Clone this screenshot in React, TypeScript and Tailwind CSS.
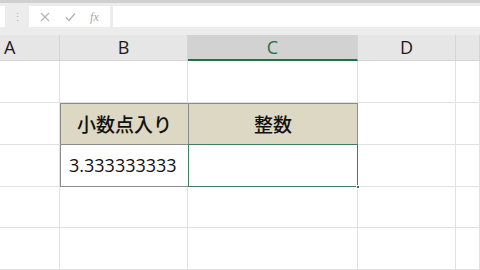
import React from "react";

const cols = ["A", "B", "C", "D", ""];
const font = { fontFamily: '"Open Sans", "Noto Sans CJK JP", sans-serif' };
const jp = { fontFamily: '"Noto Sans CJK JP", sans-serif' };

function HeaderCell({ label, selected }: { label: string; selected?: boolean }) {
  return (
    <div
      className={`flex items-center border-r border-[#d4d4d4] text-[18px] ${
        label === "A" ? "justify-start pl-[4px]" : "justify-center"
      } ${
        selected
          ? "bg-[#d2d2d2] text-[#217346] border-b-2 border-b-[#217346]"
          : "bg-[#e6e6e6] text-[#1a1a1a] border-b border-b-[#d4d4d4]"
      }`}
    >
      {label}
    </div>
  );
}

function Cell({ children, className = "" }: { children?: React.ReactNode; className?: string }) {
  return <div className={`border-r border-b border-[#e1e1e1] ${className}`}>{children}</div>;
}

export default function App() {
  return (
    <div className="w-[480px] h-[270px] overflow-hidden bg-white flex flex-col" style={font}>
      {/* formula bar */}
      <div className="h-[35px] shrink-0 bg-[#ececec] border-t-[3px] border-[#d0d0d0] flex items-start pt-[3px]">
        <div className="w-[5px] h-[21px] bg-white" />
        <div className="w-[24px] h-[21px] flex items-center justify-center text-[#b5b5b5] text-[11px] leading-none">⋮</div>
        <div className="w-[81px] h-[21px] bg-white flex items-center justify-around px-[4px]">
          <svg width="10" height="10" viewBox="0 0 10 10">
            <path d="M1 1L9 9M9 1L1 9" stroke="#b4b4b4" strokeWidth="1.2" />
          </svg>
          <svg width="11" height="10" viewBox="0 0 11 10">
            <path d="M1 5.5L4 8.5L10 1.5" stroke="#b4b4b4" strokeWidth="1.3" fill="none" />
          </svg>
          <span className="text-[12px] italic leading-none text-[#a8a8a8]" style={{ fontFamily: '"Liberation Serif", serif' }}>
            fx
          </span>
        </div>
        <div className="w-[3px]" />
        <div className="flex-1 h-[21px] bg-white" />
      </div>

      {/* grid */}
      <div className="grid grid-cols-[60px_128px_170px_98px_1fr] grid-rows-[26px_42px_42px_42px_41px_42px] flex-1">
        {cols.map((c) => (
          <HeaderCell key={c || "e"} label={c} selected={c === "C"} />
        ))}

        {/* row 1 */}
        <Cell />
        <Cell />
        <Cell />
        <Cell />
        <Cell />

        {/* row 2 : table header */}
        <Cell />
        <div className="bg-[#ddd8c3] border border-[#8c8c8c] border-r-0 flex items-center justify-center text-[19px] font-medium text-[#111]" style={jp}>
          小数点入り
        </div>
        <div className="bg-[#ddd8c3] border border-[#8c8c8c] flex items-center justify-center text-[19px] font-medium text-[#111]" style={jp}>
          整数
        </div>
        <Cell />
        <Cell />

        {/* row 3 : data */}
        <Cell />
        <div className="border border-t-0 border-r-0 border-[#8c8c8c] flex items-center pl-[8px] text-[18px] text-[#111]">
          3.333333333
        </div>
        <div className="relative border border-t-0 border-[#8c8c8c]">
          <div className="absolute -left-px -top-px right-[-1px] bottom-[-1px] border border-[#3f7f5f]" />
          <div className="absolute right-[-3px] bottom-[-3px] w-[4px] h-[4px] bg-[#217346] border border-white" />
        </div>
        <Cell />
        <Cell />

        {/* row 4 */}
        <Cell />
        <Cell />
        <Cell />
        <Cell />
        <Cell />

        {/* row 5 */}
        <Cell />
        <Cell />
        <Cell />
        <Cell />
        <Cell />
      </div>
    </div>
  );
}
